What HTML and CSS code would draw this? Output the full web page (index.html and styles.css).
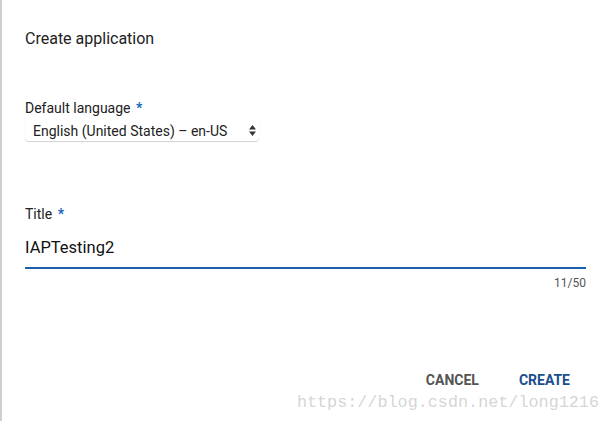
FILE: index.html
```html
<!DOCTYPE html>
<html>
<head>
<meta charset="utf-8">
<link rel="stylesheet" href="styles.css">
</head>
<body>
<div class="dialog">
  <h1 class="title">Create application</h1>
  <div class="field lang">
    <label class="label">Default language <span class="req">*</span></label>
    <div class="select">
      <span class="select-text">English (United States) – en-US</span>
      <svg class="arrows" width="7" height="11" viewBox="0 0 7 11"><path d="M3.5 0 L7 4.5 H0 Z M0 6.5 H7 L3.5 11 Z" fill="#333"/></svg>
    </div>
  </div>
  <div class="field titlefield">
    <label class="label">Title <span class="req">*</span></label>
    <div class="input">IAPTesting2</div>
    <div class="counter">11/50</div>
  </div>
  <div class="actions">
    <button class="btn cancel">CANCEL</button>
    <button class="btn create">CREATE</button>
  </div>
  <div class="watermark">https://blog.csdn.net/long1216</div>
</div>
</body>
</html>
```
FILE: styles.css
```css
html, body {
  margin: 0;
  padding: 0;
  background: #fff;
}
body {
  width: 611px;
  height: 421px;
  overflow: hidden;
  font-family: Roboto, "Liberation Sans", sans-serif;
  color: #212121;
}
.dialog {
  position: relative;
  height: 421px;
  box-sizing: border-box;
  border-left: 2px solid #cfcfcf;
  padding: 29px 25px 0 23px;
  display: flex;
  flex-direction: column;
}
.title {
  margin: 0;
  font-size: 16px;
  font-weight: 400;
  line-height: 20px;
}
.field {
  display: flex;
  flex-direction: column;
}
.lang {
  margin-top: 50px;
}
.label {
  font-size: 14px;
  line-height: 18px;
  color: #212121;
}
.req {
  color: #1565c0;
  font-weight: 700;
  margin-left: 2px;
}
.select {
  margin-top: 3px;
  width: 234px;
  height: 21px;
  box-sizing: border-box;
  display: flex;
  align-items: center;
  justify-content: space-between;
  padding: 0 3px 0 8px;
  border-radius: 4px;
  box-shadow: 0 1px 1px rgba(0,0,0,0.18);
  font-size: 14px;
  color: #222;
}
.titlefield {
  margin-top: 64px;
}
.input {
  margin-top: 13px;
  font-size: 16.5px;
  font-weight: 400;
  line-height: 24px;
  padding-bottom: 7px;
  border-bottom: 2px solid #1a5fa8;
  color: #111;
}
.counter {
  align-self: flex-end;
  font-size: 12px;
  color: #555;
  margin-top: 7px;
  line-height: 14px;
}
.actions {
  display: flex;
  justify-content: flex-end;
  gap: 40px;
  margin-top: 82px;
  padding-right: 16px;
}
.btn {
  background: none;
  border: 0;
  padding: 0;
  font-family: Roboto, "Liberation Sans", sans-serif;
  font-size: 14px;
  font-weight: 700;
  line-height: 16px;
}
.cancel {
  color: #545454;
}
.create {
  color: #1b4f8c;
}
.watermark {
  position: absolute;
  right: 12px;
  bottom: 9px;
  font-family: "Liberation Mono", monospace;
  font-size: 16.8px;
  color: #d6d6d6;
}
```
